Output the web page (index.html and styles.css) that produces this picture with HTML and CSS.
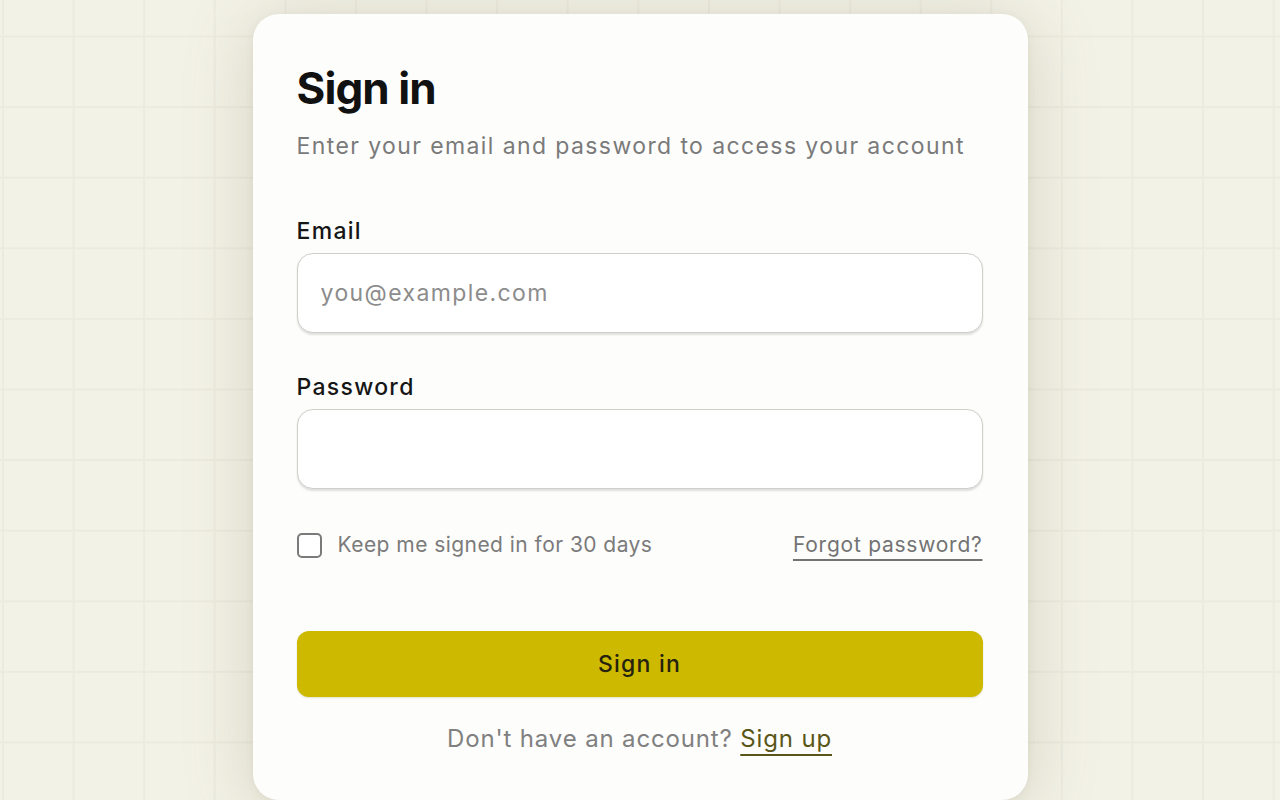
FILE: index.html
```html
<!DOCTYPE html>
<html lang="en">
<head>
<meta charset="utf-8">
<title>Sign in</title>
<link rel="stylesheet" href="styles.css">
</head>
<body>
<main class="page">
  <section class="card">
    <h1 class="title">Sign in</h1>
    <p class="subtitle">Enter your email and password to access your account</p>
    <form class="form">
      <label class="field">
        <span class="label">Email</span>
        <input class="input" type="email" placeholder="you@example.com">
      </label>
      <label class="field field-password">
        <span class="label">Password</span>
        <input class="input" type="password">
      </label>
      <div class="row">
        <label class="remember">
          <span class="checkbox"></span>
          <span class="remember-text">Keep me signed in for 30 days</span>
        </label>
        <a class="forgot" href="#">Forgot password?</a>
      </div>
      <button class="submit" type="button">Sign in</button>
    </form>
    <p class="footer">Don't have an account? <a class="signup" href="#">Sign up</a></p>
  </section>
</main>
</body>
</html>
```
FILE: styles.css
```css
* { box-sizing: border-box; }
html, body { margin: 0; padding: 0; height: 100%; }
body {
  font-family: Inter, "Noto Sans", "Liberation Sans", sans-serif;
  background-color: #f3f2e7;
  background-image:
    linear-gradient(to right, #ecebdf 1.5px, transparent 1.5px),
    linear-gradient(to bottom, #ecebdf 1.5px, transparent 1.5px);
  background-size: 70.6px 70.6px;
  background-position: 2px 35.5px;
  overflow: hidden;
}
.page {
  display: flex;
  justify-content: center;
  padding-top: 14px;
}
.card {
  width: 775px;
  background: #fdfdfc;
  border-radius: 26px;
  padding: 48px 45px 45px 44px;
  box-shadow: 0 8px 70px rgba(110, 105, 70, 0.22), 0 2px 8px rgba(110, 105, 70, 0.08);
}
.title {
  margin: 0;
  font-size: 44px;
  line-height: 52px;
  font-weight: 700;
  color: #111111;
  letter-spacing: -0.9px;
}
.subtitle {
  margin: 16px 0 0;
  font-size: 23px;
  line-height: 32px;
  color: #7a7a7a;
  letter-spacing: 1.4px;
}
.form {
  display: flex;
  flex-direction: column;
  margin-top: 53px;
}
.field {
  display: flex;
  flex-direction: column;
  gap: 6px;
}
.field-password { margin-top: 38px; }
.label {
  font-size: 23px;
  line-height: 32px;
  font-weight: 500;
  color: #161616;
  letter-spacing: 1.3px;
}
.input {
  height: 80px;
  width: 100%;
  border: 1.5px solid #cfcfcc;
  border-radius: 16px;
  background: #ffffff;
  padding: 0 23px;
  font-family: inherit;
  font-size: 23px;
  color: #222;
  box-shadow: 0 1.5px 2px rgba(0, 0, 0, 0.12);
  outline: none;
}
.input::placeholder { color: #8c8c8c; letter-spacing: 1.4px; }
.row {
  display: flex;
  justify-content: space-between;
  align-items: center;
  margin-top: 40px;
  height: 32px;
}
.remember {
  display: flex;
  align-items: center;
  gap: 16px;
}
.checkbox {
  width: 25px;
  height: 25px;
  border: 2px solid #7a7a7a;
  border-radius: 5px;
  background: #fff;
}
.remember-text {
  font-size: 21px;
  line-height: 32px;
  color: #7b7b7b;
  letter-spacing: 0.45px;
}
.forgot {
  font-size: 21px;
  line-height: 32px;
  color: #737373;
  text-decoration: underline;
  text-decoration-thickness: 1.5px;
  text-underline-offset: 7px;
  letter-spacing: 0.75px;
}
.submit {
  margin-top: 70px;
  height: 66px;
  width: 100%;
  border: none;
  border-radius: 12px;
  background: #cdb900;
  color: #25230e;
  font-family: inherit;
  font-size: 23px;
  font-weight: 500;
  letter-spacing: 1.2px;
  box-shadow: 0 1px 2px rgba(120, 110, 0, 0.2);
}
.footer {
  margin: 26px 0 0;
  text-align: center;
  font-size: 24px;
  line-height: 32px;
  color: #808080;
  letter-spacing: 0.85px;
}
.signup {
  color: #5a5618;
  text-decoration: underline;
  text-decoration-thickness: 2px;
  text-underline-offset: 7px;
}
```
